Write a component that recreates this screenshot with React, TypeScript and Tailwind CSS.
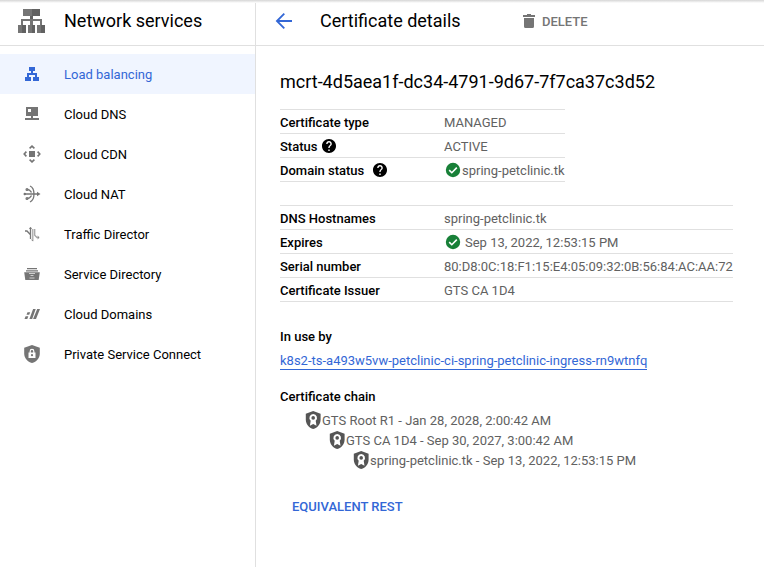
import React from "react";

const LoadBalancing = () => (
  <svg width="18" height="18" viewBox="0 0 18 18" fill="#3367d6" shapeRendering="crispEdges">
    <path d="M6 2h6v4h-2v2h4v4h2v4h-6v-4h2v-2H6v2h2v4H2v-4h2V8h4V6H6z" />
  </svg>
);
const CloudDns = () => (
  <svg width="18" height="18" viewBox="0 0 18 18" fill="#757575" shapeRendering="crispEdges">
    <path fillRule="evenodd" d="M3 2h12v9H3zM5 4v3h3V4z" />
    <path d="M8 11h2v2H8zM2 13h14v2H2z" />
  </svg>
);
const CloudCdn = () => (
  <svg width="18" height="18" viewBox="0 0 18 18" fill="none" stroke="#757575" strokeWidth="1.6">
    <path fill="#757575" stroke="none" d="M6 6h6v6H6z" />
    <path d="M6.600 3.400 9 1.200l2.400 2.200M6.600 14.600 9 16.800l2.400-2.200M3.400 6.600 1.200 9l2.200 2.400M14.600 6.600 16.800 9l-2.200 2.400" />
  </svg>
);
const CloudNat = () => (
  <svg width="18" height="18" viewBox="0 0 18 18" fill="none" stroke="#757575" strokeWidth="1.3">
    <path d="M7 1c2.700 1.200 4 4.300 4 8s-1.300 6.800-4 8M2 9h13M4.500 4.500C7 4.500 7.500 6 8.500 7.500M4.500 13.500c2.500 0 3-1.500 4-3" />
    <circle cx="4" cy="4.500" r=".9" />
    <circle cx="1.800" cy="9" r=".6" />
    <circle cx="4" cy="13.500" r=".9" />
    <path fill="#757575" stroke="none" d="m14 6.800 3.500 2.200-3.500 2.200z" />
  </svg>
);
const TrafficDirector = () => (
  <svg width="18" height="18" viewBox="0 0 18 18" fill="none" stroke="#757575" strokeWidth="1.3">
    <path d="M2 6h2l3.500 3.800M7.500 2.500V14" />
    <path d="M9.800 4v12M11.700 4v6.300l2.300 2.200h2" opacity=".65" />
    <path d="m6.200 4 1.300-1.700L8.800 4M8.500 14.500l1.300 1.700M14.500 11.200l1.700 1.300-1.700 1.300" strokeWidth="1" opacity=".7" />
  </svg>
);
const ServiceDirectory = () => (
  <svg width="18" height="18" viewBox="0 0 18 18" fill="#757575">
    <path d="M4 3h10v1.300H4zM3 5.200h12v1.300H3zM1.200 7.300h15.600L15.700 15H2.300z" />
    <path d="M6 8.500h6M7.500 10.500h3M6.500 13h5" stroke="#fff" strokeWidth="1" opacity=".65" />
  </svg>
);
const CloudDomains = () => (
  <svg width="18" height="18" viewBox="0 0 18 18" fill="#757575">
    <path d="M10.100 4h2.600L9.200 14H6.400zM14.200 4H17l-4 10h-2.900zM4.500 7.200h2.700L6.200 9.800H3.500zM2.600 11.300h2.700L4.300 14H1.500z" />
  </svg>
);
const PrivateConnect = () => (
  <svg width="18" height="18" viewBox="0 0 18 18" fill="#757575">
    <path d="m9 0 7.800 2.800v5.700C16.800 13 13.500 16.800 9 18 4.500 16.800 1.200 13 1.200 8.500V2.800z" />
    <path fill="#fff" d="M5.500 7.500h7V13h-7z" />
    <path d="M7.200 8V6.200a1.800 1.800 0 0 1 3.600 0V8" fill="none" stroke="#fff" strokeWidth="1.200" />
    <circle cx="9" cy="10.200" r="1.100" />
  </svg>
);

const nav = [
  { label: "Load balancing", Icon: LoadBalancing, active: true },
  { label: "Cloud DNS", Icon: CloudDns },
  { label: "Cloud CDN", Icon: CloudCdn },
  { label: "Cloud NAT", Icon: CloudNat },
  { label: "Traffic Director", Icon: TrafficDirector },
  { label: "Service Directory", Icon: ServiceDirectory },
  { label: "Cloud Domains", Icon: CloudDomains },
  { label: "Private Service Connect", Icon: PrivateConnect },
];

const Help = () => (
  <svg width="16" height="16" viewBox="0.600 0.600 22.800 22.800">
    <path d="M12 2C6.480 2 2 6.480 2 12s4.480 10 10 10 10-4.480 10-10S17.520 2 12 2zm1 17h-2v-2h2v2zm2.070-7.750-.9.920C13.450 12.900 13 13.500 13 15h-2v-.5c0-1.100.45-2.100 1.170-2.830l1.240-1.260c.37-.36.590-.86.590-1.410 0-1.100-.9-2-2-2s-2 .9-2 2H8c0-2.210 1.790-4 4-4s4 1.790 4 4c0 .88-.36 1.680-.93 2.250z" />
  </svg>
);
const Check = () => (
  <svg width="18" height="18" viewBox="0 0 18 18">
    <circle cx="9" cy="9" r="7.200" fill="#188038" />
    <path d="m5.200 9.100 2.600 2.600 5-5.100" fill="none" stroke="#fff" strokeWidth="1.600" />
  </svg>
);
const Shield = () => (
  <svg width="18" height="18" viewBox="0 0 18 18" className="mb-0.5 shrink-0">
    <path fill="#555" d="m9.200 0 7.400 2.700v5.800c0 4.500-3.100 8.300-7.400 9.500-4.300-1.200-7.400-5-7.400-9.500V2.700z" />
    <path fill="#fff" d="M9.200 3a3.900 3.900 0 0 1 2.500 6.800l.8 4.900-3.300-1.600-3.300 1.600.8-4.900A3.900 3.900 0 0 1 9.200 3z" />
    <circle cx="9.200" cy="6.900" r="1.800" fill="#555" />
  </svg>
);

const Row = ({ label, children }: { label: React.ReactNode; children: React.ReactNode }) => (
  <div className="flex h-6 border-b border-[#e0e0e0]">
    <div className="flex w-[164px] items-center font-medium text-black">{label}</div>
    <div className="flex items-center whitespace-nowrap">{children}</div>
  </div>
);

const Text = ({ children }: { children: React.ReactNode }) => <span className="pt-[3px]">{children}</span>;

const chain = [
  { text: "GTS Root R1 - Jan 28, 2028, 2:00:42 AM", indent: "pl-6" },
  { text: "GTS CA 1D4 - Sep 30, 2027, 3:00:42 AM", indent: "pl-12" },
  { text: "spring-petclinic.tk - Sep 13, 2022, 12:53:15 PM", indent: "pl-[72px]" },
];

export default function App() {
  return (
    <div className="relative flex h-[567px] w-[764px] overflow-hidden bg-white font-['Roboto',sans-serif] text-[13px] leading-5 text-[#616161]">
      <div className="absolute inset-x-0 top-0 h-[3px] bg-gradient-to-b from-[#d6d6d6] to-white" />
      <aside className="w-64 shrink-0 border-r border-[#e0e0e0]">
        <header className="flex h-[46px] items-center border-b border-[#e0e0e0] pb-[3px] pl-[18px] text-black">
          <svg width="27" height="24" viewBox="0 0 27 24" shapeRendering="crispEdges" fill="#757575">
            <path d="M5 0h17v7H5zM12 7h3v3h-3zM3 10h21v6h-2v-4h-7v4h-3v-4H5v4H3zM0 16h8v8H0zM10 16h7v8h-7zM19 16h8v8h-8z" />
            <path fill="#616161" d="M14 0h8v7h-8zM12 7h3v3h-3zM4 16h4v8H4zM14 16h3v8h-3zM23 16h4v8h-4z" />
          </svg>
          <h1 className="ml-[19px] text-[18px] leading-6">Network services</h1>
        </header>
        <nav className="pt-2">
          {nav.map(({ label, Icon, active }) => (
            <a key={label} className={active ? "flex h-10 items-center bg-[#f0f5ff] pl-[23px] text-[#3367d6]" : "flex h-10 items-center pl-[23px] text-black"}>
              <Icon />
              <span className="ml-[23px] pt-0.5">{label}</span>
            </a>
          ))}
        </nav>
      </aside>
      <main className="min-w-0 flex-1">
        <header className="flex h-[46px] items-center border-b border-[#e0e0e0] pb-[3px] pl-[18px]">
          <svg width="20" height="20" viewBox="0 0 20 20" fill="none" stroke="#3367d6" strokeWidth="1.800">
            <path d="M18 10H3.500M10.300 2.600 2.900 10l7.400 7.400" />
          </svg>
          <h2 className="ml-[26px] w-[202px] text-[18px] leading-6 text-black">Certificate details</h2>
          <svg width="14" height="16" viewBox="0 0 14 16" fill="#757575">
            <path d="M2 5h10v8.500a1.500 1.500 0 0 1-1.500 1.500h-7A1.500 1.500 0 0 1 2 13.500zM5 1h4v1h4v2H1V2h4z" />
          </svg>
          <span className="ml-[6px] pt-0.5 font-medium text-[#757575]">DELETE</span>
        </header>
        <div className="pl-6 pt-6">
          <h3 className="text-[18px] leading-6 text-black">mcrt-4d5aea1f-dc34-4791-9d67-7f7ca37c3d52</h3>
          <section className="mt-[15px] w-[285px] border-t border-[#e0e0e0]">
            <Row label={<Text>Certificate type</Text>}><Text>MANAGED</Text></Row>
            <Row label={<><Text>Status</Text><span className="ml-1"><Help /></span></>}><Text>ACTIVE</Text></Row>
            <Row label={<><Text>Domain status</Text><span className="ml-2"><Help /></span></>}><Check /><Text>spring-petclinic.tk</Text></Row>
          </section>
          <section className="mt-[23px] w-[453px] border-t border-[#e0e0e0]">
            <Row label={<Text>DNS Hostnames</Text>}><Text>spring-petclinic.tk</Text></Row>
            <Row label={<Text>Expires</Text>}><Check /><span className="ml-[3px] pt-[3px]">Sep 13, 2022, 12:53:15 PM</span></Row>
            <Row label={<Text>Serial number</Text>}><Text>80:D8:0C:18:F1:15:E4:05:09:32:0B:56:84:AC:AA:72</Text></Row>
            <Row label={<Text>Certificate Issuer</Text>}><Text>GTS CA 1D4</Text></Row>
          </section>
          <h4 className="mt-[25px] font-medium text-black">In use by</h4>
          <a className="mt-1 inline-block h-[19px] border-b border-[#3367d6] text-[#3367d6]">k8s2-ts-a493w5vw-petclinic-ci-spring-petclinic-ingress-rn9wtnfq</a>
          <h4 className="mt-4 font-medium text-black">Certificate chain</h4>
          <div className="mt-1">
            {chain.map(({ text, indent }) => (
              <div key={text} className={`flex h-5 items-center ${indent}`}><Shield />{text}</div>
            ))}
          </div>
          <button className="ml-3 mt-[26px] block font-medium text-[#3367d6]">EQUIVALENT REST</button>
        </div>
      </main>
    </div>
  );
}
